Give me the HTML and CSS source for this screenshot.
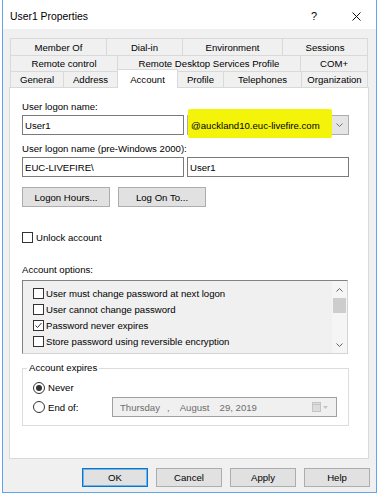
FILE: index.html
```html
<!DOCTYPE html>
<html lang="en">
<head>
    <meta charset="UTF-8">
    <meta name="viewport" content="width=device-width, initial-scale=1.0">
    <title>User1 Properties</title>
    <link rel="stylesheet" href="styles.css">
</head>
<body>
    <div class="window">
        <div class="titlebar">
            <span class="title">User1 Properties</span>
            <span class="help-btn">?</span>
            <span class="close-btn">
                <svg width="9" height="9" viewBox="0 0 9 9"><path d="M0.5 0.5 L8.5 8.5 M8.5 0.5 L0.5 8.5" stroke="#111" stroke-width="1" fill="none"/></svg>
            </span>
        </div>

        <div class="tabs">
            <div class="tab-row row-1">
                <div class="tab">Member Of</div>
                <div class="tab">Dial-in</div>
                <div class="tab">Environment</div>
                <div class="tab">Sessions</div>
            </div>
            <div class="tab-row row-2">
                <div class="tab">Remote control</div>
                <div class="tab">Remote Desktop Services Profile</div>
                <div class="tab">COM+</div>
            </div>
            <div class="tab-row row-3">
                <div class="tab">General</div>
                <div class="tab">Address</div>
                <div class="tab active">Account</div>
                <div class="tab">Profile</div>
                <div class="tab">Telephones</div>
                <div class="tab">Organization</div>
            </div>
        </div>

        <div class="panel">
            <div class="field-label first">User logon name:</div>
            <div class="input-row">
                <div class="textbox">User1</div>
                <div class="combo">
                    <span class="marker"></span>
                    <span class="combo-text">@auckland10.euc-livefire.com</span>
                    <svg class="combo-arrow" width="7" height="4" viewBox="0 0 7 4"><polyline points="0.5,0.5 3.5,3.5 6.5,0.5" stroke="#707070" fill="none"/></svg>
                </div>
            </div>

            <div class="field-label second">User logon name (pre-Windows 2000):</div>
            <div class="input-row">
                <div class="textbox">EUC-LIVEFIRE\</div>
                <div class="textbox">User1</div>
            </div>

            <div class="button-row">
                <div class="btn wide">Logon Hours...</div>
                <div class="btn wide">Log On To...</div>
            </div>

            <div class="check-line unlock">
                <span class="checkbox"></span>
                <span>Unlock account</span>
            </div>

            <div class="field-label options">Account options:</div>
            <div class="listbox">
                <div class="list-items">
                    <div class="check-line item">
                        <span class="checkbox"></span>
                        <span>User must change password at next logon</span>
                    </div>
                    <div class="check-line item">
                        <span class="checkbox"></span>
                        <span>User cannot change password</span>
                    </div>
                    <div class="check-line item">
                        <span class="checkbox">
                            <svg width="9" height="9" viewBox="0 0 9 9"><polyline points="1.5,4.5 3.5,6.5 7.5,2" stroke="#333" fill="none"/></svg>
                        </span>
                        <span>Password never expires</span>
                    </div>
                    <div class="check-line item">
                        <span class="checkbox"></span>
                        <span>Store password using reversible encryption</span>
                    </div>
                </div>
                <div class="scrollbar">
                    <div class="scroll-btn">
                        <svg width="7" height="4" viewBox="0 0 7 4"><polyline points="0.5,3.5 3.5,0.5 6.5,3.5" stroke="#606060" fill="none"/></svg>
                    </div>
                    <div class="thumb"></div>
                    <div class="scroll-btn down">
                        <svg width="7" height="4" viewBox="0 0 7 4"><polyline points="0.5,0.5 3.5,3.5 6.5,0.5" stroke="#606060" fill="none"/></svg>
                    </div>
                </div>
            </div>

            <fieldset class="groupbox">
                <legend>Account expires</legend>
                <div class="group-body">
                    <div class="radio-line never">
                        <span class="radio checked"></span>
                        <span>Never</span>
                    </div>
                    <div class="radio-line end">
                        <span class="end-label">
                            <span class="radio"></span>
                            <span>End of:</span>
                        </span>
                        <div class="datepicker">
                            <span>Thursday</span>
                            <span class="comma">,</span>
                            <span class="month">August</span>
                            <span class="day">29, 2019</span>
                            <svg class="cal-icon" width="17" height="10" viewBox="0 0 17 10">
                                <rect x="0.5" y="0.5" width="8" height="9" fill="#dcdcdc" stroke="#c4c4c4"/>
                                <line x1="1" y1="2.5" x2="8" y2="2.5" stroke="#c4c4c4"/>
                                <polygon points="11,4 16,4 13.5,7" fill="#c4c4c4"/>
                            </svg>
                        </div>
                    </div>
                </div>
            </fieldset>
        </div>

        <div class="dialog-buttons">
            <div class="btn dlg default">OK</div>
            <div class="btn dlg">Cancel</div>
            <div class="btn dlg">Apply</div>
            <div class="btn dlg">Help</div>
        </div>
    </div>
</body>
</html>
```

FILE: styles.css
```css
body {
    margin: 0;
    background: #fff;
    font-family: "Liberation Sans", Arial, sans-serif;
    font-size: 9.6px;
    color: #000;
}
.window {
    margin-left: 2px;
    width: 375px;
    height: 493px;
    box-sizing: border-box;
    border: 1px solid #5fa7ea;
    border-top: none;
    background: #f0f0f0;
}
.titlebar {
    height: 29px;
    background: #fff;
    display: flex;
    align-items: center;
    padding: 3px 15px 0 7px;
    box-sizing: border-box;
}
.title {
    flex: 1;
    font-size: 10.4px;
}
.help-btn {
    width: 14px;
    text-align: center;
    font-size: 11px;
    margin-right: 31px;
}
.close-btn {
    display: flex;
}

/* tabs */
.tabs {
    margin: 9px 0 0 7px;
    width: 358px;
}
.tab-row {
    display: grid;
    border-left: 1px solid #d9d9d9;
}
.row-1 {
    grid-template-columns: 96px 76px 100px 85px;
    height: 17px;
}
.row-2 {
    grid-template-columns: 107px 183px 67px;
    height: 16px;
}
.row-3 {
    grid-template-columns: 53px 54px 60px 46px 78px 66px;
    height: 16px;
}
.tab {
    border-top: 1px solid #d9d9d9;
    border-right: 1px solid #d9d9d9;
    display: flex;
    align-items: center;
    justify-content: center;
    white-space: nowrap;
}
.tab.active {
    background: #fff;
    margin: -2px 0 -1px -1px;
    border-left: 1px solid #d9d9d9;
    position: relative;
    z-index: 1;
}

/* panel */
.panel {
    margin-left: 6px;
    width: 360px;
    height: 372px;
    box-sizing: border-box;
    border: 1px solid #d9d9d9;
    background: #fff;
    padding-left: 12px;
}
.field-label {
    height: 12px;
    line-height: 12px;
}
.field-label.first {
    margin-top: 13px;
}
.field-label.second {
    margin-top: 8px;
}
.field-label.options {
    margin-top: 20px;
}
.input-row {
    display: flex;
    gap: 3px;
    margin-top: 2px;
}
.textbox {
    width: 162px;
    height: 20px;
    box-sizing: border-box;
    border: 1px solid #7a7a7a;
    padding-left: 2px;
    display: flex;
    align-items: center;
    background: #fff;
}
.combo {
    position: relative;
    width: 162px;
    height: 20px;
    box-sizing: border-box;
    border: 1px solid #adadad;
    background: #e5e5e5;
    padding-left: 3px;
    display: flex;
    align-items: center;
}
.marker {
    position: absolute;
    left: 0;
    top: -7px;
    width: 144px;
    height: 29px;
    background: #f4f40a;
    border-radius: 2px;
    filter: blur(0.6px);
}
.combo-text {
    position: relative;
}
.combo-arrow {
    margin-left: auto;
    margin-right: 5px;
    position: relative;
}
.button-row {
    display: flex;
    gap: 8px;
    margin-top: 10px;
}
.btn {
    background: #e1e1e1;
    border: 1px solid #adadad;
    box-sizing: border-box;
    display: flex;
    align-items: center;
    justify-content: center;
}
.btn.wide {
    width: 88px;
    height: 20px;
}

/* checkboxes */
.check-line {
    display: flex;
    align-items: center;
    gap: 3px;
}
.check-line.unlock {
    margin-top: 24px;
    height: 13px;
}
.checkbox {
    width: 11px;
    height: 11px;
    box-sizing: border-box;
    border: 1px solid #333;
    background: #fff;
    display: flex;
    align-items: center;
    justify-content: center;
}
.listbox {
    margin-top: 4px;
    width: 326px;
    height: 74px;
    box-sizing: border-box;
    border: 1px solid #d4d4d4;
    border-top-color: #828282;
    border-left-color: #828282;
    background: #f0f0f0;
    display: flex;
}
.list-items {
    flex: 1;
    padding: 4px 0 0 10px;
}
.check-line.item {
    height: 16px;
    gap: 2px;
}
.scrollbar {
    width: 15px;
    background: #f5f5f5;
    display: flex;
    flex-direction: column;
    align-items: center;
}
.scroll-btn {
    height: 17px;
    width: 100%;
    display: flex;
    align-items: center;
    justify-content: center;
}
.scroll-btn.down {
    margin-top: auto;
}
.thumb {
    width: 13px;
    height: 15px;
    background: #cdcdcd;
}

/* account expires */
.groupbox {
    margin: 8px 0 0;
    padding: 0;
    width: 327px;
    box-sizing: border-box;
    border: 1px solid #dcdcdc;
}
.groupbox legend {
    margin-left: 4px;
    padding: 0 2px;
    line-height: 12px;
}
.group-body {
    padding: 7px 0 8px 10px;
}
.radio-line {
    display: flex;
    align-items: center;
    gap: 3px;
}
.radio-line.never {
    height: 13px;
}
.radio-line.end {
    height: 20px;
    margin-top: 3px;
    gap: 0;
}
.end-label {
    width: 79px;
    display: flex;
    align-items: center;
    gap: 3px;
}
.radio {
    width: 12px;
    height: 12px;
    box-sizing: border-box;
    border: 1px solid #333;
    border-radius: 50%;
    background: #fff;
    display: flex;
    align-items: center;
    justify-content: center;
}
.radio.checked::after {
    content: "";
    width: 6px;
    height: 6px;
    border-radius: 50%;
    background: #333;
}
.datepicker {
    width: 225px;
    height: 20px;
    box-sizing: border-box;
    border: 1px solid #a0a0a0;
    background: #f0f0f0;
    color: #6d6d6d;
    display: flex;
    align-items: center;
    padding: 0 7px;
}
.comma {
    margin-left: 7px;
}
.month,
.day {
    margin-left: 10px;
}
.cal-icon {
    margin-left: auto;
}

/* dialog buttons */
.dialog-buttons {
    display: flex;
    justify-content: flex-end;
    gap: 8px;
    padding-right: 6px;
    margin-top: 9px;
}
.btn.dlg {
    width: 66px;
    height: 19px;
}
.btn.default {
    border-color: #0078d7;
    box-shadow: inset 0 0 0 1px rgba(0, 120, 215, 0.45);
}
```
